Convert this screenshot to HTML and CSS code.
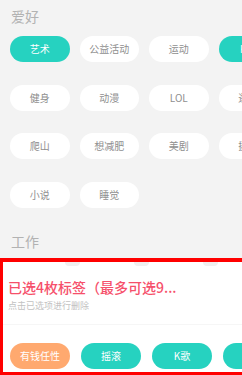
FILE: index.html
```html
<!DOCTYPE html>
<html lang="zh">
<head>
<meta charset="utf-8">
<link rel="stylesheet" href="styles.css">
</head>
<body>
<div class="page">
  <div class="section-title">爱好</div>
  <div class="tags">
    <span class="tag on">艺术</span>
    <span class="tag">公益活动</span>
    <span class="tag">运动</span>
    <span class="tag on">K歌</span>
    <span class="tag">健身</span>
    <span class="tag">动漫</span>
    <span class="tag">LOL</span>
    <span class="tag">逛街</span>
    <span class="tag">爬山</span>
    <span class="tag">想减肥</span>
    <span class="tag">美剧</span>
    <span class="tag">摄影</span>
    <span class="tag">小说</span>
    <span class="tag">睡觉</span>
  </div>
  <div class="section-title work">工作</div>
  <div class="panel">
    <div class="bumps"><i></i><i></i><i></i></div>
    <div class="panel-title">已选4枚标签（最多可选9...</div>
    <div class="panel-sub">点击已选项进行删除</div>
    <div class="sep"></div>
    <div class="chosen">
      <span class="tag orange">有钱任性</span>
      <span class="tag on">摇滚</span>
      <span class="tag on">K歌</span>
      <span class="tag on">旅行</span>
    </div>
  </div>
</div>
</body>
</html>
```

FILE: styles.css
```css
html, body {
  margin: 0;
  padding: 0;
}
body {
  background: #f3f3f3;
  font-family: "Noto Sans CJK SC", "Noto Sans", sans-serif;
  width: 242px;
  height: 375px;
  overflow: hidden;
}
.page {
  width: 242px;
  height: 375px;
  overflow: hidden;
}
.section-title {
  padding: 6px 0 0 11px;
  font-size: 14px;
  line-height: 20px;
  color: #b2b2b2;
}
.section-title.work {
  padding-top: 0;
  margin-top: 23px;
}
.tags {
  display: flex;
  flex-wrap: wrap;
  width: 300px;
  margin-top: 10px;
  padding-left: 10px;
  column-gap: 10px;
  row-gap: 22.7px;
}
.tag {
  display: flex;
  align-items: center;
  justify-content: center;
  flex: none;
  width: 59.5px;
  height: 26px;
  border-radius: 13px;
  background: #ffffff;
  color: #8f8f8f;
  font-size: 10px;
  line-height: 12px;
}
.tag.on {
  background: #26d2c0;
  color: #ffffff;
}
.tag.orange {
  background: #ffa96f;
  color: #ffffff;
}
.panel {
  box-sizing: border-box;
  margin-top: 7px;
  width: 270px;
  height: 117px;
  background: #ffffff;
  border-top: 4px solid #ff0000;
  border-left: 3px solid #ff0000;
  border-bottom: 3px solid #ff0000;
}
.bumps {
  display: flex;
  gap: 54px;
  padding-left: 62px;
  height: 4px;
}
.bumps i {
  width: 15px;
  height: 4px;
  background: #efefef;
  border-radius: 0 0 6px 6px;
}
.panel-title {
  margin-top: 11px;
  padding-left: 5px;
  font-size: 14px;
  line-height: 20px;
  font-weight: 500;
  color: #f6506b;
  white-space: nowrap;
}
.panel-sub {
  margin-top: 3px;
  padding-left: 5px;
  font-size: 9px;
  line-height: 12px;
  color: #c2c2c2;
  white-space: nowrap;
}
.sep {
  margin-top: 12px;
  height: 1px;
  background: #f6f6f6;
}
.chosen {
  display: flex;
  margin-top: 18px;
  padding-left: 7px;
  gap: 11px;
}
.chosen .tag {
  width: 60px;
}
```
